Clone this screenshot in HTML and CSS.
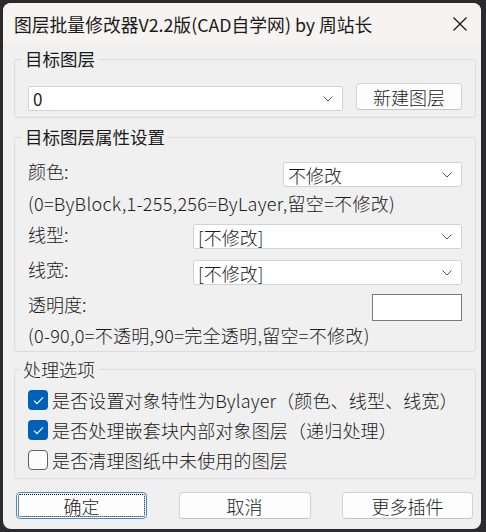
FILE: index.html
```html
<!DOCTYPE html>
<html lang="zh-CN">
<head>
<meta charset="utf-8">
<title>图层批量修改器</title>
<link rel="stylesheet" href="styles.css">
</head>
<body>
<div class="window">
  <div class="titlebar">
    <span class="title">图层批量修改器V2.2版(CAD自学网) by 周站长</span>
    <svg class="close" width="16" height="16" viewBox="0 0 16 16"><path d="M1.5 1.5L14.5 14.5M14.5 1.5L1.5 14.5" stroke="#1a1a1a" stroke-width="1.3" fill="none"/></svg>
  </div>
  <div class="content">
    <fieldset class="group g1">
      <legend>目标图层</legend>
      <div class="g1-body">
        <div class="combo combo-layer"><span>0</span><svg class="chev" width="10" height="6" viewBox="0 0 10 6"><path d="M0.5 0.5L5 5L9.5 0.5" stroke="#555" stroke-width="1" fill="none"/></svg></div>
        <button class="btn btn-new">新建图层</button>
      </div>
    </fieldset>

    <fieldset class="group g2">
      <legend>目标图层属性设置</legend>
      <div class="g2-body">
        <div class="row row-color">
          <span class="lbl">颜色:</span>
          <div class="combo combo-color"><span>不修改</span><svg class="chev" width="10" height="6" viewBox="0 0 10 6"><path d="M0.5 0.5L5 5L9.5 0.5" stroke="#555" stroke-width="1" fill="none"/></svg></div>
        </div>
        <div class="hint hint1">(0=ByBlock,1-255,256=ByLayer,留空=不修改)</div>
        <div class="row row-ltype">
          <span class="lbl lbl-down">线型:</span>
          <div class="combo combo-wide"><span>[不修改]</span><svg class="chev" width="10" height="6" viewBox="0 0 10 6"><path d="M0.5 0.5L5 5L9.5 0.5" stroke="#555" stroke-width="1" fill="none"/></svg></div>
        </div>
        <div class="row row-lweight">
          <span class="lbl">线宽:</span>
          <div class="combo combo-wide"><span>[不修改]</span><svg class="chev" width="10" height="6" viewBox="0 0 10 6"><path d="M0.5 0.5L5 5L9.5 0.5" stroke="#555" stroke-width="1" fill="none"/></svg></div>
        </div>
        <div class="row row-trans">
          <span class="lbl lbl-down">透明度:</span>
          <div class="textbox"></div>
        </div>
        <div class="hint hint2">(0-90,0=不透明,90=完全透明,留空=不修改)</div>
      </div>
    </fieldset>

    <fieldset class="group g3">
      <legend>处理选项</legend>
      <div class="g3-body">
        <div class="check-row">
          <span class="cb on"><svg width="11" height="9" viewBox="0 0 11 9"><path d="M1 4.6L4 7.6L10 1.4" stroke="#fff" stroke-width="1.2" fill="none"/></svg></span>
          <span class="cb-text">是否设置对象特性为Bylayer（颜色、线型、线宽）</span>
        </div>
        <div class="check-row">
          <span class="cb on"><svg width="11" height="9" viewBox="0 0 11 9"><path d="M1 4.6L4 7.6L10 1.4" stroke="#fff" stroke-width="1.2" fill="none"/></svg></span>
          <span class="cb-text">是否处理嵌套块内部对象图层（递归处理）</span>
        </div>
        <div class="check-row">
          <span class="cb off"></span>
          <span class="cb-text">是否清理图纸中未使用的图层</span>
        </div>
      </div>
    </fieldset>

    <div class="buttons">
      <button class="btn btn-dlg btn-ok">确定</button>
      <button class="btn btn-dlg btn-mid">取消</button>
      <button class="btn btn-dlg">更多插件</button>
    </div>
  </div>
</div>
</body>
</html>
```
FILE: styles.css
```css
* { box-sizing: border-box; }
html, body { margin: 0; padding: 0; }
body {
  background: #2b2b2d;
  width: 486px;
  height: 532px;
  overflow: hidden;
  font-family: "Noto Sans CJK SC", "Noto Sans", sans-serif;
  color: #1a1a1a;
}
.window {
  margin: 3px 0 0 3px;
  width: 478px;
  height: 526px;
  background: #f0f0f0;
  border-radius: 8px;
  overflow: hidden;
  display: flex;
  flex-direction: column;
}
.titlebar {
  height: 40px;
  flex: none;
  background: #f7f3f1;
  display: flex;
  align-items: center;
  justify-content: space-between;
  padding: 2px 13px 0 11px;
}
.title {
  font-size: 17.8px;
  line-height: 20px;
  white-space: nowrap;
}
.close { display: block; }

.content {
  padding: 6px 5px 0 11px;
}
.group {
  margin: 0;
  padding: 0;
  border: 1px solid #dcdcdc;
  border-radius: 3px;
  min-width: 0;
}
.group legend {
  margin-left: 7px;
  padding: 0 3px;
  font-size: 17.5px;
  line-height: 20px;
}
.g2 { margin-top: 9px; }
.g3 { margin-top: 7px; }
.g3 legend { margin-left: 5px; font-weight: 300; font-size: 18px; }

.g1-body {
  padding: 14px 13px 6px 13px;
  display: flex;
  justify-content: space-between;
  align-items: flex-start;
}
.combo {
  height: 25px;
  background: #fff;
  border: 1px solid #d3d3d3;
  border-radius: 2px;
  display: flex;
  align-items: center;
  justify-content: space-between;
  padding: 0 9px 0 4px;
  font-size: 18px;
  font-weight: 300;
  line-height: 20px;
}
.combo-layer { width: 315px; margin-top: 3px; font-size: 17px; font-weight: 400; }
.combo-color { width: 179px; }
.combo-wide { width: 269px; }
.chev { display: block; flex: none; }

.btn {
  height: 27px;
  background: #fdfdfd;
  border: 1px solid #d2d2d2;
  border-bottom-color: #c4c4c4;
  border-radius: 4px;
  font-family: "Noto Sans CJK SC", "Noto Sans", sans-serif;
  font-size: 18px;
  font-weight: 300;
  line-height: 20px;
  color: #1a1a1a;
  padding: 0;
}
.btn-new { width: 106px; }

.g2-body {
  padding: 15px 13px 6px 13px;
}
.row {
  display: flex;
  justify-content: space-between;
  align-items: flex-start;
}
.lbl {
  font-size: 18px;
  font-weight: 300;
  line-height: 19px;
}
.lbl-down { margin-top: 1px; }
.row-color { height: 25px; }
.row-ltype { margin-top: 11px; }
.row-lweight { margin-top: 11px; }
.row-trans { margin-top: 9px; }
.textbox {
  width: 90px;
  height: 27px;
  background: #fff;
  border: 1px solid #7a7a7a;
}
.hint {
  font-size: 18px;
  font-weight: 300;
  line-height: 19px;
  letter-spacing: 0.3px;
  white-space: nowrap;
}
.hint1 { margin-top: 7px; }
.hint2 { margin-top: 5px; }

.g3-body {
  padding: 11px 13px 8px 13px;
  display: flex;
  flex-direction: column;
  gap: 10px;
}
.check-row {
  display: flex;
  align-items: center;
  height: 20px;
}
.cb {
  width: 20px;
  height: 20px;
  flex: none;
  border-radius: 4px;
  display: flex;
  align-items: center;
  justify-content: center;
}
.cb.on { background: #005fb8; }
.cb.off { background: #fbfbfb; border: 1px solid #5f5f5f; }
.cb svg { display: block; }
.cb-text {
  margin-left: 4px;
  font-size: 18px;
  font-weight: 300;
  line-height: 20px;
  letter-spacing: 0.15px;
  white-space: nowrap;
}

.buttons {
  margin: 13px 3px 0 2px;
  display: flex;
  justify-content: space-between;
}
.btn-dlg { width: 131px; }
.btn-mid { width: 132px; }
.btn-ok {
  border: 1px solid #3a8fd8;
  outline: 1px dotted #000;
  outline-offset: -3px;
}
```
